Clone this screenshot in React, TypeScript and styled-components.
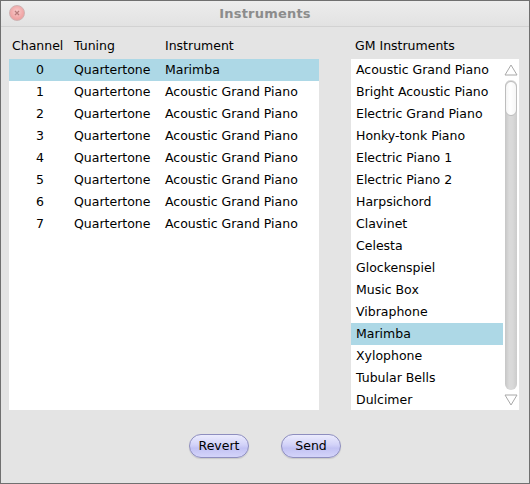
import React from "react";
import styled, { createGlobalStyle } from "styled-components";

const Global = createGlobalStyle`
  html, body { margin: 0; padding: 0; background: #e4e4e4; }
  body { font-family: "DejaVu Sans", "Liberation Sans", sans-serif; }
`;

const Window = styled.div`
  width: 530px;
  height: 484px;
  box-sizing: border-box;
  border: 1px solid #707070;
  background: #e4e4e4;
  display: flex;
  flex-direction: column;
  font-size: 12.5px;
  color: #000;
`;

const TitleBar = styled.div`
  position: relative;
  height: 26px;
  flex: none;
  box-sizing: border-box;
  padding-bottom: 1px;
  background: linear-gradient(#ededed, #e2e2e2);
  border-bottom: 1px solid #d2d2d2;
  display: flex;
  align-items: center;
  justify-content: center;
`;

const Title = styled.div`
  font-weight: bold;
  font-size: 13px;
  color: #8c8c8c;
  letter-spacing: 0.2px;
`;

const CloseButton = styled.div`
  position: absolute;
  left: 8px;
  top: 4px;
  width: 16px;
  height: 16px;
  border-radius: 50%;
  box-sizing: border-box;
  border: 1px solid #cfb2b2;
  background: radial-gradient(circle at 50% 40%, #f8cccc 0%, #f0a6a6 60%, #e69a9a 100%);
  display: flex;
  align-items: center;
  justify-content: center;
`;

const Body = styled.div`
  flex: 1;
  display: flex;
  flex-direction: column;
`;

const Panels = styled.div`
  display: flex;
  padding: 0 9px 0 8px;
  gap: 32px;
`;

const LeftPanel = styled.div`
  width: 310px;
  display: flex;
  flex-direction: column;
`;

const RightPanel = styled.div`
  width: 168px;
  display: flex;
  flex-direction: column;
`;

const cols = "62px 91px 1fr";

const HeaderRow = styled.div`
  display: grid;
  grid-template-columns: ${cols};
  height: 32px;
  box-sizing: border-box;
  padding-top: 11px;
  line-height: 16px;
`;

const HeaderCell = styled.div`
  padding-left: 3px;
  white-space: nowrap;
`;

const TableArea = styled.div`
  height: 351px;
  background: #fff;
`;

const Row = styled.div<{ $selected?: boolean }>`
  display: grid;
  grid-template-columns: ${cols};
  height: 22px;
  line-height: 21px;
  background: ${(p) => (p.$selected ? "#add8e6" : "transparent")};
`;

const Cell = styled.div<{ $center?: boolean }>`
  padding-left: ${(p) => (p.$center ? "0" : "3px")};
  text-align: ${(p) => (p.$center ? "center" : "left")};
  white-space: nowrap;
  overflow: hidden;
`;

const ListHeader = styled.div`
  height: 32px;
  box-sizing: border-box;
  padding: 11px 0 0 4px;
  line-height: 16px;
`;

const ListArea = styled.div`
  height: 351px;
  background: #fff;
  display: flex;
`;

const Items = styled.div`
  width: 152px;
  overflow: hidden;
`;

const Item = styled.div<{ $selected?: boolean }>`
  height: 22px;
  line-height: 21px;
  padding-left: 5px;
  white-space: nowrap;
  background: ${(p) => (p.$selected ? "#add8e6" : "transparent")};
`;

const ScrollBar = styled.div`
  width: 16px;
  display: flex;
  flex-direction: column;
  align-items: center;
`;

const ArrowBox = styled.div<{ $h: number }>`
  height: ${(p) => p.$h}px;
  display: flex;
  align-items: center;
  justify-content: center;
  width: 16px;
`;

const Track = styled.div`
  width: 12px;
  height: 310px;
  border-radius: 6px;
  background: linear-gradient(90deg, #c6c6c6 0%, #dadada 35%, #d8d8d8 65%, #cbcbcb 100%);
  position: relative;
`;

const Thumb = styled.div`
  position: absolute;
  left: 0;
  top: 1px;
  width: 12px;
  height: 35px;
  box-sizing: border-box;
  border-radius: 6px;
  border: 1px solid #bdbdbd;
  background: linear-gradient(90deg, #f4f4f4 0%, #ffffff 40%, #f6f6f6 100%);
`;

const Footer = styled.div`
  display: flex;
  justify-content: center;
  gap: 32px;
  padding-top: 24px;
`;

const PillButton = styled.button`
  width: 60px;
  height: 24px;
  box-sizing: border-box;
  border-radius: 12px;
  border: 1px solid #8e8ebf;
  background: linear-gradient(#ececfd 0%, #d2d2f8 45%, #c2c2f3 60%, #d4d4fa 100%);
  font-family: "DejaVu Sans", "Liberation Sans", sans-serif;
  font-size: 12.5px;
  line-height: 20px;
  color: #000;
  padding: 0;
  box-shadow: 0 1px 1px rgba(0, 0, 0, 0.12);
`;

const channels = [
  { ch: 0, instrument: "Marimba" },
  ...Array.from({ length: 7 }, (_, i) => ({ ch: i + 1, instrument: "Acoustic Grand Piano" })),
];

const gm = [
  "Acoustic Grand Piano",
  "Bright Acoustic Piano",
  "Electric Grand Piano",
  "Honky-tonk Piano",
  "Electric Piano 1",
  "Electric Piano 2",
  "Harpsichord",
  "Clavinet",
  "Celesta",
  "Glockenspiel",
  "Music Box",
  "Vibraphone",
  "Marimba",
  "Xylophone",
  "Tubular Bells",
  "Dulcimer",
];

export default function App() {
  return (
    <>
      <Global />
      <Window>
        <TitleBar>
          <CloseButton>
            <svg width="6" height="6" viewBox="0 0 6 6">
              <path d="M1 1L5 5M5 1L1 5" stroke="#b77a7a" strokeWidth="1.3" />
            </svg>
          </CloseButton>
          <Title>Instruments</Title>
        </TitleBar>
        <Body>
          <Panels>
            <LeftPanel>
              <HeaderRow>
                <HeaderCell>Channel</HeaderCell>
                <HeaderCell>Tuning</HeaderCell>
                <HeaderCell>Instrument</HeaderCell>
              </HeaderRow>
              <TableArea>
                {channels.map((c) => (
                  <Row key={c.ch} $selected={c.ch === 0}>
                    <Cell $center>{c.ch}</Cell>
                    <Cell>Quartertone</Cell>
                    <Cell>{c.instrument}</Cell>
                  </Row>
                ))}
              </TableArea>
            </LeftPanel>
            <RightPanel>
              <ListHeader>GM Instruments</ListHeader>
              <ListArea>
                <Items>
                  {gm.map((g) => (
                    <Item key={g} $selected={g === "Marimba"}>
                      {g}
                    </Item>
                  ))}
                </Items>
                <ScrollBar>
                  <ArrowBox $h={21}>
                    <svg width="14" height="12" viewBox="0 0 14 12">
                      <path d="M7 1L13 11H1Z" fill="#fff" stroke="#a8a8a8" strokeWidth="1" />
                    </svg>
                  </ArrowBox>
                  <Track>
                    <Thumb />
                  </Track>
                  <ArrowBox $h={20}>
                    <svg width="14" height="12" viewBox="0 0 14 12">
                      <path d="M1 1H13L7 11Z" fill="#fff" stroke="#a8a8a8" strokeWidth="1" />
                    </svg>
                  </ArrowBox>
                </ScrollBar>
              </ListArea>
            </RightPanel>
          </Panels>
          <Footer>
            <PillButton>Revert</PillButton>
            <PillButton>Send</PillButton>
          </Footer>
        </Body>
      </Window>
    </>
  );
}
